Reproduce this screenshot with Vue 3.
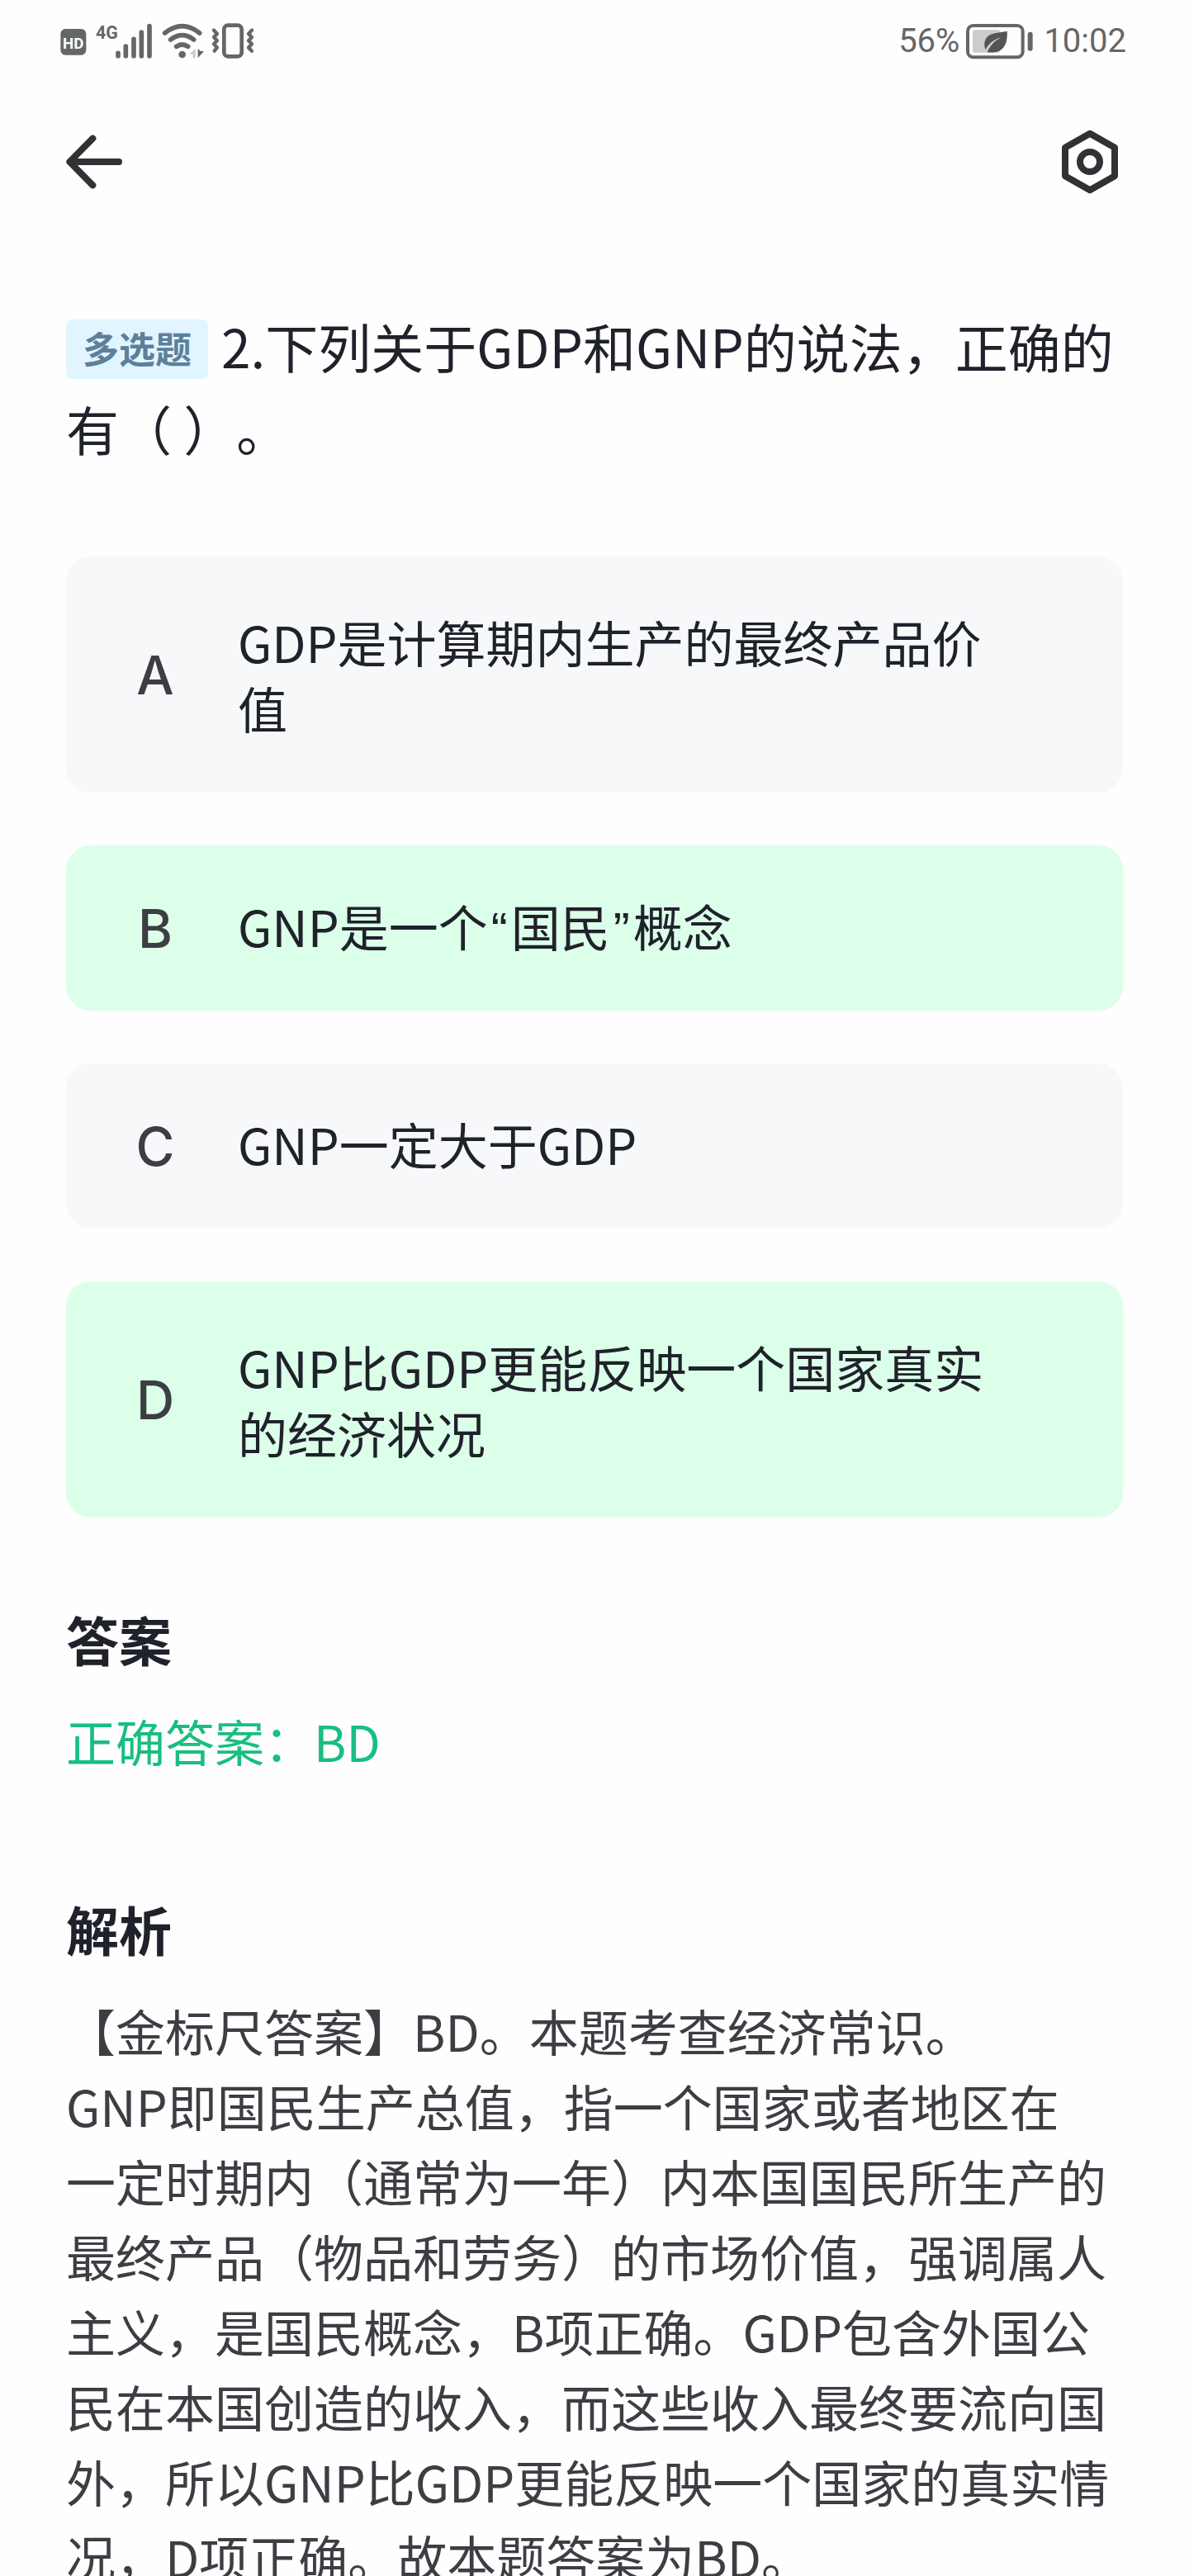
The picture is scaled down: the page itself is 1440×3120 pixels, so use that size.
<template>
    <div class="page">
        <div class="status-bar">
            <svg class="status-icons" viewBox="0 0 780 180" aria-hidden="true">
                <rect x="40" y="45" width="93" height="95" rx="18" fill="#666" />
                <text x="86" y="116" class="hd" text-anchor="middle">HD</text>
                <text x="168" y="80" class="network">4G</text>
                <g stroke="#666" stroke-width="17" stroke-linecap="round">
                    <path d="M249 133v10M277 108v35M306 82v61M334 57v86M363 35v108" />
                </g>
                <g fill="none" stroke="#666" stroke-width="17" stroke-linecap="round">
                    <path d="M419 60Q482 10 545 60" />
                    <path d="M440 84Q482 52 524 84" />
                    <path d="M461 109Q482 95 503 109" />
                </g>
                <circle cx="482" cy="138" r="13" fill="#666" />
                <path d="M530 117v34h-9v-14h-13z" fill="#ccc" />
                <path d="M539 117v34l22-25h-12z" fill="#666" />
                <rect x="634" y="32" width="64" height="113" rx="14" fill="none" stroke="#666" stroke-width="14" />
                <g fill="none" stroke="#666" stroke-width="13" stroke-linecap="round" stroke-linejoin="round">
                    <path d="M597 50l12 13-12 12 12 13-12 12 12 13-10 12" />
                    <path d="M735 50l-12 13 12 12-12 13 12 12-12 13 12 12" />
                </g>
            </svg>
            <div class="status-right">
                <span>56%</span>
                <svg class="battery" viewBox="306 22 246 138" aria-hidden="true">
                    <rect x="312" y="34" width="200" height="115" rx="20" fill="none" stroke="#666" stroke-width="12" />
                    <rect x="330" y="50" width="100" height="82" rx="8" fill="#ccc" />
                    <rect x="530" y="57" width="18" height="69" rx="9" fill="#666" />
                    <path d="M455 54C420 62 372 57 373 106q0 8 4 15c12-22 29-36 55-44-24 15-40 31-49 54 45 5 76-13 72-77z" fill="#555" />
                </svg>
                <span>10:02</span>
            </div>
        </div>

        <header class="nav">
            <button class="icon-btn" type="button" aria-label="返回">
                <svg viewBox="60 48 204 240">
                    <path d="M157 83L73 168l84 85M76 168h176" />
                </svg>
            </button>
            <button class="icon-btn" type="button" aria-label="设置">
                <svg viewBox="78 48 204 240">
                    <path d="M180 65l90 51v104l-90 51-90-51V116z" />
                    <circle cx="180" cy="168" r="36" />
                </svg>
            </button>
        </header>

        <main class="content">
            <h1 class="question"><span class="badge">多选题</span>2.下列关于GDP和GNP的说法，正确的有（ ）。</h1>

            <div class="options">
                <button
                    v-for="option in options"
                    :key="option.key"
                    type="button"
                    class="option"
                    :class="{ correct: isCorrect(option.key), long: option.text.length > 14 }"
                    :aria-pressed="isCorrect(option.key)"
                >
                    <span class="letter">{{ option.key }}</span>
                    <span class="option-text"><span v-for="(part, i) in splitQuotes(option.text)" :key="i" :class="{ quote: isQuote(part) }">{{ part }}</span></span>
                </button>
            </div>

            <section class="block">
                <h2>答案</h2>
                <p class="answer">正确答案：{{ answer }}</p>
            </section>

            <section class="block">
                <h2>解析</h2>
                <p class="analysis">{{ analysis }}</p>
            </section>
        </main>
    </div>
</template>

<script setup>
import { ref } from 'vue';

const answer = ref('BD');

const options = ref([
    { key: 'A', text: 'GDP是计算期内生产的最终产品价值' },
    { key: 'B', text: 'GNP是一个“国民”概念' },
    { key: 'C', text: 'GNP一定大于GDP' },
    { key: 'D', text: 'GNP比GDP更能反映一个国家真实的经济状况' }
]);

const analysis = [
    '【金标尺答案】BD。本题考查经济常识。',
    'GNP即国民生产总值，指一个国家或者地区在',
    '一定时期内（通常为一年）内本国国民所生产的最终产品（物品和劳务）的市场价值，强调属人主义，是国民概念，B项正确。GDP包含外国公民在本国创造的收入，而这些收入最终要流向国外，所以GNP比GDP更能反映一个国家的真实情况，D项正确。故本题答案为BD。'
].join('\n');

const isCorrect = (key) => answer.value.includes(key);

// curly quotes are full width in the CJK font, so they get their own span
const isQuote = (part) => part === '“' || part === '”';
const splitQuotes = (text) => text.split(/([“”])/);
</script>

<style>
body {
    margin: 0;
    background: #fefefe;
}
</style>

<style scoped>
.page {
    display: flex;
    flex-direction: column;
    height: 100vh;
    overflow: hidden;
    background: #fefefe;
    color: #20222b;
    font-family: "Noto Sans CJK SC", sans-serif;
    text-spacing-trim: space-all;
}

.status-bar {
    display: flex;
    flex-shrink: 0;
    justify-content: space-between;
    align-items: center;
    height: 100px;
    padding: 0 76px 0 60px;
    box-sizing: border-box;
}

.status-icons {
    width: 260px;
    height: 60px;
}

.hd {
    font: bold 56px Roboto, sans-serif;
    fill: #fff;
}

.network {
    font: bold 64px Roboto, sans-serif;
    fill: #666;
}

.status-right {
    display: flex;
    align-items: center;
    gap: 8px;
    color: #666;
    font-family: Roboto, sans-serif;
    font-size: 40px;
    line-height: 60px;
}

.battery {
    width: 82px;
    height: 46px;
    margin-right: 4px;
}

.nav {
    display: flex;
    flex-shrink: 0;
    justify-content: space-between;
    align-items: center;
    height: 192px;
    padding: 0 86px 0 80px;
}

.icon-btn {
    padding: 0;
    border: none;
    background: none;
    cursor: pointer;
}

.icon-btn svg {
    display: block;
    width: 68px;
    height: 80px;
    fill: none;
    stroke: #303236;
    stroke-width: 24;
    stroke-linecap: round;
    stroke-linejoin: round;
}

.content {
    flex: 1;
    min-height: 0;
    overflow-y: auto;
    scrollbar-width: none;
    padding: 76px 80px 0;
}

.question {
    margin: 0;
    font-size: 64px;
    font-weight: 400;
    line-height: 100px;
}

.badge {
    display: inline-block;
    margin-right: 16px;
    padding: 0 20px 4px;
    border-radius: 8px;
    background: #e0f5ff;
    color: #5f7f99;
    font-size: 44px;
    font-weight: 700;
    line-height: 68px;
    vertical-align: 6px;
}

.options {
    display: flex;
    flex-direction: column;
    gap: 64px;
    margin-top: 106px;
}

.option {
    display: flex;
    align-items: center;
    gap: 60px;
    padding: 0 140px 0 68px;
    border: none;
    border-radius: 30px;
    background: #f7f8fa;
    color: inherit;
    font-family: inherit;
    text-align: left;
    cursor: pointer;
}

.correct {
    background: #dcffe9;
}

.letter {
    flex: 0 0 80px;
    color: #3d3e44;
    font-family: Inter, sans-serif;
    font-size: 64px;
    font-weight: 500;
    text-align: center;
}

.option-text {
    flex: 1;
    padding: 57px 0 63px;
    font-size: 60px;
    line-height: 80px;
}

.long .option-text {
    padding-top: 63px;
}

.quote {
    padding: 0 4px;
    font-family: "Liberation Sans", sans-serif;
    line-height: 60px;
}

.block {
    margin-top: 98px;
}

.block + .block {
    margin-top: 134px;
}

h2 {
    margin: 0 0 30px;
    font-size: 64px;
    font-weight: 700;
    line-height: 96px;
}

.answer,
.analysis {
    margin: 0;
    font-size: 60px;
    line-height: 91px;
}

.answer {
    color: #18bf80;
}

.analysis {
    color: #3d3e44;
    white-space: pre-line;
}
</style>
